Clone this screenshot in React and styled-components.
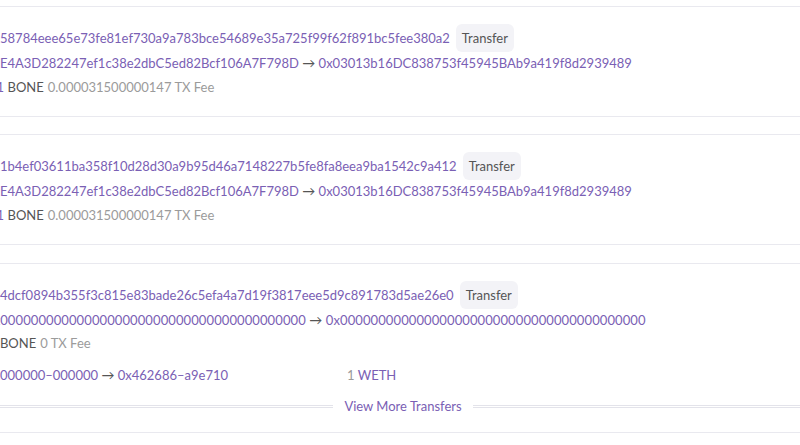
import React from "react";
import styled, { createGlobalStyle } from "styled-components";

const Global = createGlobalStyle`
  html, body { margin: 0; padding: 0; background: #fff; overflow: hidden; }
  body { font-family: "Lato", "Noto Sans", sans-serif; font-size: 13px; color: #555; }
`;

const Page = styled.div`
  width: 838px;
  margin-left: -16px;
  padding-top: 6px;
  display: flex;
  flex-direction: column;
  gap: 17px;
`;

const Card = styled.div`
  border-top: 1px solid #e9e9ef;
  border-bottom: 1px solid #e9e9ef;
  padding: 17px 0 ${(p) => p.$pb || 19}px 2px;
  margin-top: ${(p) => p.$mt || 0}px;
  display: flex;
  flex-direction: column;
`;

const HashRow = styled.div`
  display: flex;
  align-items: center;
  gap: 6px;
  height: 28px;
`;

const Link = styled.span`
  color: #7a60b4;
  white-space: nowrap;
  letter-spacing: ${(p) => p.$ls || 0}px;
`;

const Badge = styled.span`
  background: #f3f3f7;
  color: #555;
  border-radius: 6px;
  height: 28px;
  padding: 0 6px;
  display: inline-flex;
  align-items: center;
`;

const Line = styled.div`
  height: 20px;
  line-height: 20px;
  margin-top: ${(p) => p.$mt || 4}px;
  white-space: nowrap;
  display: flex;
  gap: 4px;
`;

const Muted = styled.span`
  color: #9b9b9b;
`;

const Dark = styled.span`
  color: #555;
`;

const TokenRow = styled.div`
  display: grid;
  grid-template-columns: 361px auto;
  height: 20px;
  line-height: 20px;
  margin-top: 12px;
  white-space: nowrap;
`;

const Divider = styled.div`
  display: flex;
  align-items: center;
  gap: 11px;
  margin-top: 11px;
  height: 20px;
  margin-left: -2px;
`;

const Rule = styled.div`
  flex: 1;
  height: 0;
  border-top: 3px double #e3e3ea;
`;

const More = styled.span`
  color: #7a60b4;
`;

const Arrow = styled.span`
  color: #555;
`;

const cards = [
  {
    hash: "0x58784eee65e73fe81ef730a9a783bce54689e35a725f99f62f891bc5fee380a2",
    from: "0xE4A3D282247ef1c38e2dbC5ed82Bcf106A7F798D",
    to: "0x03013b16DC838753f45945BAb9a419f8d2939489",
    value: "0.1",
    fee: "0.000031500000147",
  },
  {
    hash: "0x1b4ef03611ba358f10d28d30a9b95d46a7148227b5fe8fa8eea9ba1542c9a412",
    from: "0xE4A3D282247ef1c38e2dbC5ed82Bcf106A7F798D",
    to: "0x03013b16DC838753f45945BAb9a419f8d2939489",
    value: "0.1",
    fee: "0.000031500000147",
  },
];

const zero = "0x" + "0".repeat(40);

export default function App() {
  return (
    <>
      <Global />
      <Page>
        {cards.map((c, i) => (
          <Card key={i}>
            <HashRow>
              <Link>{c.hash}</Link>
              <Badge>Transfer</Badge>
            </HashRow>
            <Line $mt={1}>
              <Link>
                {c.from} <Arrow>→</Arrow> {c.to}
              </Link>
            </Line>
            <Line>
              <span>
                <Link>{c.value}</Link> <Dark>BONE</Dark>
              </span>
              <Muted>{c.fee} TX Fee</Muted>
            </Line>
          </Card>
        ))}
        <Card $mt={1} $pb={16}>
          <HashRow>
            <Link>0x4dcf0894b355f3c815e83bade26c5efa4a7d19f3817eee5d9c891783d5ae26e0</Link>
            <Badge>Transfer</Badge>
          </HashRow>
          <Line $mt={1}>
            <Link $ls={0.1}>
              {zero} <Arrow>→</Arrow> {zero}
            </Link>
          </Line>
          <Line $mt={3}>
            <span>
              <Link>0.</Link> <Dark>BONE</Dark>
            </span>
            <Muted>0 TX Fee</Muted>
          </Line>
          <TokenRow>
            <Link>
              0x000000–000000 <Arrow>→</Arrow> 0x462686–a9e710
            </Link>
            <span>
              <Muted>1</Muted> <Link>WETH</Link>
            </span>
          </TokenRow>
          <Divider>
            <Rule />
            <More>View More Transfers</More>
            <Rule />
          </Divider>
        </Card>
      </Page>
    </>
  );
}
